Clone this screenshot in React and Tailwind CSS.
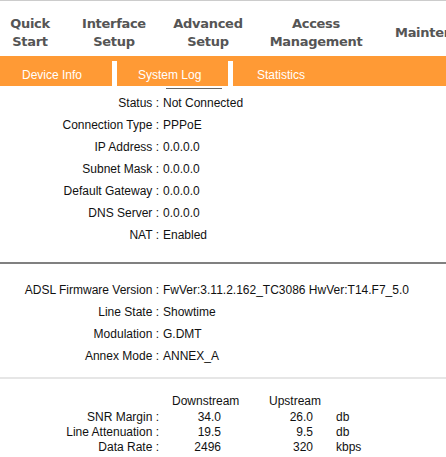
import React from "react";

const navItems = [
  { l1: "Quick", l2: "Start", w: "w-[60px]" },
  { l1: "Interface", l2: "Setup", w: "w-[108px]" },
  { l1: "Advanced", l2: "Setup", w: "w-[80px]" },
  { l1: "Access", l2: "Management", w: "w-[136px]" },
];

const sec1 = [
  ["Status", "Not Connected"],
  ["Connection Type", "PPPoE"],
  ["IP Address", "0.0.0.0"],
  ["Subnet Mask", "0.0.0.0"],
  ["Default Gateway", "0.0.0.0"],
  ["DNS Server", "0.0.0.0"],
  ["NAT", "Enabled"],
];

const sec2 = [
  ["ADSL Firmware Version", "FwVer:3.11.2.162_TC3086 HwVer:T14.F7_5.0"],
  ["Line State", "Showtime"],
  ["Modulation", "G.DMT"],
  ["Annex Mode", "ANNEX_A"],
];

const sec3 = [
  ["SNR Margin", "34.0", "26.0", "db"],
  ["Line Attenuation", "19.5", "9.5", "db"],
  ["Data Rate", "2496", "320", "kbps"],
];

function Row({ label, value }) {
  return (
    <div className="flex h-[22px] items-center whitespace-nowrap">
      <div className="w-[159px] shrink-0 text-right">{label} :</div>
      <div className="pl-[4px]">{value}</div>
    </div>
  );
}

export default function App() {
  return (
    <div className="w-[446px] h-[457px] overflow-hidden bg-white font-['Liberation_Sans',Arial,sans-serif] text-[12px] text-[#111]">
      <div className="h-[1px] bg-[#cccccc]" />
      {/* Top nav */}
      <div className="flex pt-[14px] pb-[5px] font-['DejaVu_Sans',Verdana,sans-serif] font-bold text-[13px] tracking-[-0.3px] leading-[18px] text-[#555555] whitespace-nowrap overflow-hidden">
        {navItems.map((n) => (
          <div key={n.l1} className={`${n.w} shrink-0 text-center`}>
            <div>{n.l1}</div>
            <div>{n.l2}</div>
          </div>
        ))}
        <div className="shrink-0 pl-[11px] flex items-center">Maintenance</div>
      </div>
      {/* Sub tabs */}
      <div className="flex h-[30px] bg-[#ff9a35] text-white whitespace-nowrap">
        <div className="w-[112px] shrink-0 pl-[22px] pt-[10px]">Device Info</div>
        <div className="w-[5px] shrink-0 mt-[5px] bg-white" />
        <div className="w-[111px] shrink-0 pl-[21px] pt-[10px]">System Log</div>
        <div className="w-[5px] shrink-0 mt-[5px] bg-white" />
        <div className="shrink-0 pl-[24px] pt-[10px]">Statistics</div>
      </div>
      <div className="h-[4px]">
        <div className="mt-[2px] ml-[166px] w-[56px] h-[1px] bg-[#666666]" />
      </div>
      {/* Section 1 */}
      <div>
        {sec1.map(([l, v]) => (
          <Row key={l} label={l} value={v} />
        ))}
      </div>
      <div className="mt-[16px] h-[2px] bg-[#808080]" />
      {/* Section 2 */}
      <div className="mt-[15px]">
        {sec2.map(([l, v]) => (
          <Row key={l} label={l} value={v} />
        ))}
      </div>
      <div className="mt-[10px] h-[2px] bg-[#e6e6e6]" />
      {/* Section 3 */}
      <div className="mt-[14px] whitespace-nowrap">
        <div className="flex h-[16px] items-center">
          <div className="w-[160px] shrink-0" />
          <div className="w-[90px] shrink-0 pl-[12px]">Downstream</div>
          <div className="w-[86px] shrink-0 pl-[19px]">Upstream</div>
        </div>
        {sec3.map(([l, d, u, unit]) => (
          <div key={l} className="flex h-[15px] items-center">
            <div className="w-[159px] shrink-0 text-right">{l} :</div>
            <div className="w-[62px] shrink-0 text-right">{d}</div>
            <div className="w-[92px] shrink-0 text-right">{u}</div>
            <div className="pl-[23px]">{unit}</div>
          </div>
        ))}
      </div>
    </div>
  );
}
